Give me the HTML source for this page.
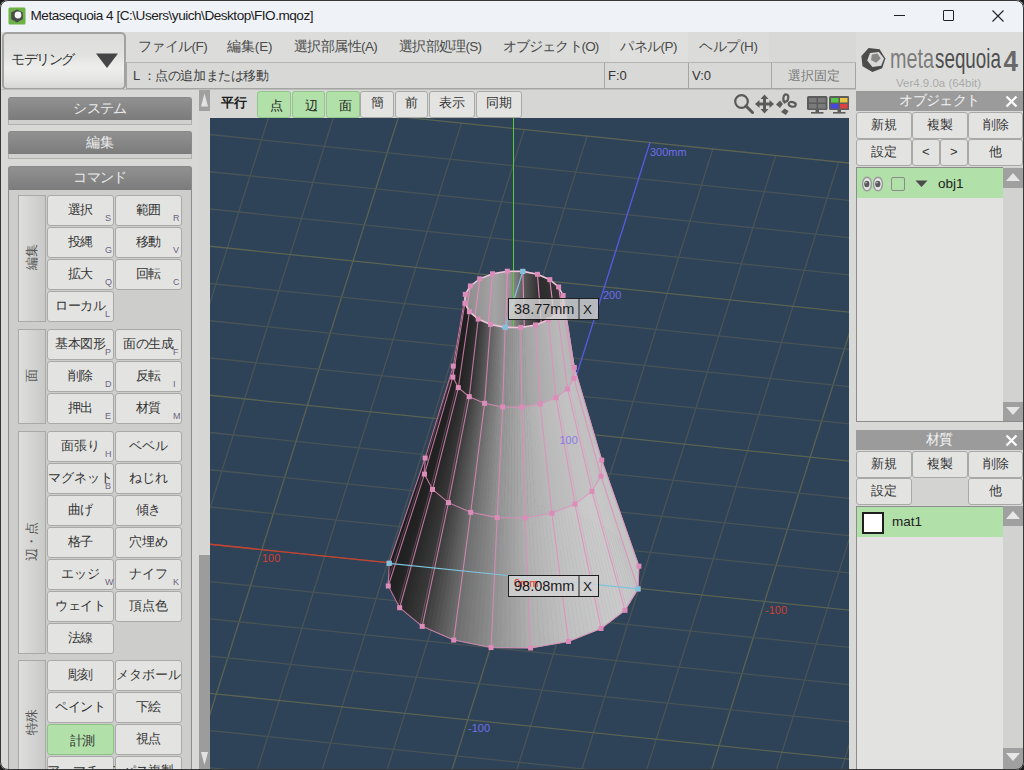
<!DOCTYPE html><html lang="ja"><head><meta charset="utf-8"><style>
*{box-sizing:border-box;margin:0;padding:0}
body{width:1024px;height:770px;overflow:hidden;background:#1e1e1e;font-family:"Liberation Sans",sans-serif;position:relative}
.a{position:absolute}
.t{position:absolute;white-space:nowrap;line-height:1}
.btn{position:absolute;background:#e3e4e2;border:1px solid #a9aaa8;border-radius:3px}
.hdr{position:absolute;background:linear-gradient(#8f8f8f,#7a7a7a);border-radius:3px 3px 0 0;color:#ececec;font-size:13px;text-align:center}
.sb{position:absolute;background:#9c9c9c}
</style></head><body>
<div class="a" id="win" style="left:0;top:0;width:1024px;height:770px;overflow:hidden;background:#d8d9d7">

<div class="a" style="left:0;top:0;width:1024px;height:32px;background:#eff3f8"></div>
<svg class="a" style="left:8px;top:7px" width="18" height="18" viewBox="0 0 18 18">
<rect x="0.5" y="0.5" width="17" height="17" rx="1.5" fill="#6cb245"/>
<polygon points="9,2.5 14.8,5.6 14.8,12.2 9,15.5 3.2,12.2 3.2,5.6" fill="#4a4a4a"/>
<circle cx="10" cy="8" r="3.4" fill="#f4f4f4"/>
</svg>
<div class="t" style="left:30.5px;top:9.2px;font-size:13.6px;letter-spacing:-0.5px;color:#1b1b1b">Metasequoia 4 [C:\Users\yuich\Desktop\FIO.mqoz]</div>
<div class="a" style="left:894px;top:15px;width:11px;height:1px;background:#222"></div>
<div class="a" style="left:943px;top:10px;width:11px;height:11px;border:1px solid #222;border-radius:1px"></div>
<svg class="a" style="left:992px;top:10px" width="12" height="12" viewBox="0 0 12 12"><path d="M0.5 0.5L11.5 11.5M11.5 0.5L0.5 11.5" stroke="#222" stroke-width="1.1"/></svg>
<div class="a" style="left:0;top:32px;width:1024px;height:58px;background:#dcdddb"></div>
<div class="a" style="left:2px;top:32px;width:124px;height:58px;border:2px solid #a2a3a1;border-radius:5px;background:linear-gradient(#dcdddb,#e2e3e1 40%,#eeefed 62%,#e4e5e3 85%,#d6d7d5)"></div>
<div class="t" style="left:11px;top:52px;font-size:14px;letter-spacing:-1.4px;color:#333">モデリング</div>
<svg class="a" style="left:95px;top:53px" width="24" height="16"><polygon points="1,0.5 23,0.5 12,15" fill="#454545"/></svg>
<div class="a" style="left:610px;top:32px;width:78px;height:30px;background:#dfe0de"></div>
<div class="a" style="left:688px;top:32px;width:81px;height:30px;background:#dbdcda"></div>
<div class="a" style="left:769px;top:32px;width:87px;height:30px;background:#d8d9d7"></div>
<div class="t" style="left:138px;top:40px;font-size:13.5px;letter-spacing:-0.6px;color:#4a4a4a">ファイル(F)</div>
<div class="t" style="left:227px;top:40px;font-size:13.5px;letter-spacing:-0.1px;color:#4a4a4a">編集(E)</div>
<div class="t" style="left:294px;top:40px;font-size:13.5px;letter-spacing:-0.6px;color:#4a4a4a">選択部属性(A)</div>
<div class="t" style="left:399px;top:40px;font-size:13.5px;letter-spacing:-0.7px;color:#4a4a4a">選択部処理(S)</div>
<div class="t" style="left:503px;top:40px;font-size:13.5px;letter-spacing:-0.9px;color:#4a4a4a">オブジェクト(O)</div>
<div class="t" style="left:620px;top:40px;font-size:13.5px;letter-spacing:-0.5px;color:#4a4a4a">パネル(P)</div>
<div class="t" style="left:699px;top:40px;font-size:13.5px;letter-spacing:-0.35px;color:#4a4a4a">ヘルプ(H)</div>
<div class="a" style="left:126px;top:62px;width:730px;height:2px;background:#b3b4b2"></div>
<div class="a" style="left:126px;top:63px;width:730px;height:27px;background:#d8d9d7;border-left:1px solid #a5a6a4;border-bottom:2px solid #a5a6a4"></div>
<div class="t" style="left:133px;top:69px;font-size:13px;letter-spacing:-0.4px;color:#3e3e3e">L ：点の追加または移動</div>
<div class="a" style="left:604px;top:63px;width:1px;height:27px;background:#a5a6a4"></div>
<div class="a" style="left:688px;top:63px;width:1px;height:27px;background:#a5a6a4"></div>
<div class="a" style="left:771px;top:63px;width:1px;height:27px;background:#a5a6a4"></div>
<div class="a" style="left:855px;top:63px;width:1px;height:27px;background:#a5a6a4"></div>
<div class="t" style="left:608px;top:69px;font-size:13px;color:#333">F:0</div>
<div class="t" style="left:692px;top:69px;font-size:13px;color:#333">V:0</div>
<div class="t" style="left:788px;top:69px;font-size:13px;color:#7a7a7a">選択固定</div>
<svg class="a" style="left:856px;top:40px" width="168" height="50" viewBox="856 40 168 50">
<polygon points="868.6,48.1 879.6,49.2 885.4,58.4 882.2,68.2 872.4,72.1 862.5,66.3 861.4,56" fill="#4c4c4c"/>
<polygon points="870,53 878.9,52 884,58.6 881.2,65.8 872.4,67 867.2,60.5" fill="#dadbd9"/>
<polygon points="871.9,54.4 877.5,53.4 880.8,58.4 876.1,62.8 871,60" fill="#888"/>
<text x="890" y="68.3" font-family="Liberation Sans, sans-serif" font-size="28" fill="#7c7c7c" textLength="44" lengthAdjust="spacingAndGlyphs">meta</text>
<text x="935" y="68.3" font-family="Liberation Sans, sans-serif" font-size="28" fill="#4e4e4e" textLength="66" lengthAdjust="spacingAndGlyphs">sequoia</text>
<text x="1003.5" y="70.8" font-family="Liberation Sans, sans-serif" font-size="29" font-weight="bold" fill="#686868" textLength="14.5" lengthAdjust="spacingAndGlyphs">4</text>
<text x="896" y="87" font-family="Liberation Sans, sans-serif" font-size="11" fill="#a9a9a9" textLength="85" lengthAdjust="spacingAndGlyphs">Ver4.9.0a (64bit)</text>
</svg>
<div class="a" style="left:0;top:90px;width:199px;height:680px;background:#d8d9d7"></div>
<div class="a" style="left:0;top:89px;width:856px;height:1px;background:#bdbebc"></div>
<div class="a" style="left:8px;top:97px;width:184px;height:23px;border-radius:3px 3px 0 0;background:linear-gradient(#919191,#7b7b7b);border:1px solid #8a8a8a;border-bottom:none"></div>
<div class="t" style="left:8px;top:102px;width:184px;text-align:center;font-size:13.5px;letter-spacing:-0.6px;color:#ebebeb">システム</div>
<div class="a" style="left:8px;top:120px;width:184px;height:5px;background:#d0d1cf;border:1px solid #b0b1af;border-top:none"></div>
<div class="a" style="left:8px;top:131px;width:184px;height:23px;border-radius:3px 3px 0 0;background:linear-gradient(#919191,#7b7b7b);border:1px solid #8a8a8a;border-bottom:none"></div>
<div class="t" style="left:8px;top:136px;width:184px;text-align:center;font-size:13.5px;letter-spacing:0;color:#ebebeb">編集</div>
<div class="a" style="left:8px;top:154px;width:184px;height:5px;background:#d0d1cf;border:1px solid #b0b1af;border-top:none"></div>
<div class="a" style="left:8px;top:166px;width:184px;height:24px;border-radius:3px 3px 0 0;background:linear-gradient(#919191,#7b7b7b);border:1px solid #8a8a8a;border-bottom:none"></div>
<div class="t" style="left:8px;top:170.5px;width:184px;text-align:center;font-size:13.5px;letter-spacing:-0.6px;color:#ebebeb">コマンド</div>
<div class="a" style="left:8px;top:190px;width:184px;height:580px;background:#cdcecc;border-left:1px solid #8c8c8c;border-right:1px solid #8c8c8c"></div>
<div class="a" style="left:18px;top:195px;width:28px;height:127px;background:linear-gradient(90deg,#dedfdd,#c9cac8);border:1px solid #a9aaa8"></div>
<div class="t" style="left:-8.5px;top:251.0px;width:80px;text-align:center;font-size:12.5px;color:#555;transform:rotate(-90deg)">編集</div>
<div class="btn" style="left:47px;top:195px;width:67px;height:31px;"></div>
<div class="t" style="left:47px;top:203.5px;width:67px;text-align:center;font-size:12.5px;letter-spacing:-0.1px;color:#333">選択</div>
<div class="t" style="left:105px;top:213.5px;font-size:9px;color:#6e6280">S</div>
<div class="btn" style="left:115px;top:195px;width:67px;height:31px;"></div>
<div class="t" style="left:115px;top:203.5px;width:67px;text-align:center;font-size:12.5px;letter-spacing:-0.1px;color:#333">範囲</div>
<div class="t" style="left:173px;top:213.5px;font-size:9px;color:#6e6280">R</div>
<div class="btn" style="left:47px;top:227px;width:67px;height:31px;"></div>
<div class="t" style="left:47px;top:235.5px;width:67px;text-align:center;font-size:12.5px;letter-spacing:-0.1px;color:#333">投縄</div>
<div class="t" style="left:105px;top:245.5px;font-size:9px;color:#6e6280">G</div>
<div class="btn" style="left:115px;top:227px;width:67px;height:31px;"></div>
<div class="t" style="left:115px;top:235.5px;width:67px;text-align:center;font-size:12.5px;letter-spacing:-0.1px;color:#333">移動</div>
<div class="t" style="left:173px;top:245.5px;font-size:9px;color:#6e6280">V</div>
<div class="btn" style="left:47px;top:259px;width:67px;height:31px;"></div>
<div class="t" style="left:47px;top:267.5px;width:67px;text-align:center;font-size:12.5px;letter-spacing:-0.1px;color:#333">拡大</div>
<div class="t" style="left:105px;top:277.5px;font-size:9px;color:#6e6280">Q</div>
<div class="btn" style="left:115px;top:259px;width:67px;height:31px;"></div>
<div class="t" style="left:115px;top:267.5px;width:67px;text-align:center;font-size:12.5px;letter-spacing:-0.1px;color:#333">回転</div>
<div class="t" style="left:173px;top:277.5px;font-size:9px;color:#6e6280">C</div>
<div class="btn" style="left:47px;top:291px;width:67px;height:31px;"></div>
<div class="t" style="left:47px;top:299.5px;width:67px;text-align:center;font-size:12.5px;letter-spacing:-0.1px;color:#333">ローカル</div>
<div class="t" style="left:105px;top:309.5px;font-size:9px;color:#6e6280">L</div>
<div class="a" style="left:18px;top:329px;width:28px;height:95px;background:linear-gradient(90deg,#dedfdd,#c9cac8);border:1px solid #a9aaa8"></div>
<div class="t" style="left:-8.5px;top:369.0px;width:80px;text-align:center;font-size:12.5px;color:#555;transform:rotate(-90deg)">面</div>
<div class="btn" style="left:47px;top:329px;width:67px;height:31px;"></div>
<div class="t" style="left:47px;top:337.5px;width:67px;text-align:center;font-size:12.5px;letter-spacing:-0.1px;color:#333">基本図形</div>
<div class="t" style="left:105px;top:347.5px;font-size:9px;color:#6e6280">P</div>
<div class="btn" style="left:115px;top:329px;width:67px;height:31px;"></div>
<div class="t" style="left:115px;top:337.5px;width:67px;text-align:center;font-size:12.5px;letter-spacing:-0.1px;color:#333">面の生成</div>
<div class="t" style="left:173px;top:347.5px;font-size:9px;color:#6e6280">F</div>
<div class="btn" style="left:47px;top:361px;width:67px;height:31px;"></div>
<div class="t" style="left:47px;top:369.5px;width:67px;text-align:center;font-size:12.5px;letter-spacing:-0.1px;color:#333">削除</div>
<div class="t" style="left:105px;top:379.5px;font-size:9px;color:#6e6280">D</div>
<div class="btn" style="left:115px;top:361px;width:67px;height:31px;"></div>
<div class="t" style="left:115px;top:369.5px;width:67px;text-align:center;font-size:12.5px;letter-spacing:-0.1px;color:#333">反転</div>
<div class="t" style="left:173px;top:379.5px;font-size:9px;color:#6e6280">I</div>
<div class="btn" style="left:47px;top:393px;width:67px;height:31px;"></div>
<div class="t" style="left:47px;top:401.5px;width:67px;text-align:center;font-size:12.5px;letter-spacing:-0.1px;color:#333">押出</div>
<div class="t" style="left:105px;top:411.5px;font-size:9px;color:#6e6280">E</div>
<div class="btn" style="left:115px;top:393px;width:67px;height:31px;"></div>
<div class="t" style="left:115px;top:401.5px;width:67px;text-align:center;font-size:12.5px;letter-spacing:-0.1px;color:#333">材質</div>
<div class="t" style="left:173px;top:411.5px;font-size:9px;color:#6e6280">M</div>
<div class="a" style="left:18px;top:431px;width:28px;height:223px;background:linear-gradient(90deg,#dedfdd,#c9cac8);border:1px solid #a9aaa8"></div>
<div class="t" style="left:-8.5px;top:535.0px;width:80px;text-align:center;font-size:12.5px;color:#555;transform:rotate(-90deg)">辺・点</div>
<div class="btn" style="left:47px;top:431px;width:67px;height:31px;"></div>
<div class="t" style="left:47px;top:439.5px;width:67px;text-align:center;font-size:12.5px;letter-spacing:-0.1px;color:#333">面張り</div>
<div class="t" style="left:105px;top:449.5px;font-size:9px;color:#6e6280">H</div>
<div class="btn" style="left:115px;top:431px;width:67px;height:31px;"></div>
<div class="t" style="left:115px;top:439.5px;width:67px;text-align:center;font-size:12.5px;letter-spacing:-0.1px;color:#333">ベベル</div>
<div class="btn" style="left:47px;top:463px;width:67px;height:31px;"></div>
<div class="t" style="left:47px;top:471.5px;width:67px;text-align:center;font-size:12.5px;letter-spacing:-0.1px;color:#333">マグネット</div>
<div class="t" style="left:105px;top:481.5px;font-size:9px;color:#6e6280">B</div>
<div class="btn" style="left:115px;top:463px;width:67px;height:31px;"></div>
<div class="t" style="left:115px;top:471.5px;width:67px;text-align:center;font-size:12.5px;letter-spacing:-0.1px;color:#333">ねじれ</div>
<div class="btn" style="left:47px;top:495px;width:67px;height:31px;"></div>
<div class="t" style="left:47px;top:503.5px;width:67px;text-align:center;font-size:12.5px;letter-spacing:-0.1px;color:#333">曲げ</div>
<div class="btn" style="left:115px;top:495px;width:67px;height:31px;"></div>
<div class="t" style="left:115px;top:503.5px;width:67px;text-align:center;font-size:12.5px;letter-spacing:-0.1px;color:#333">傾き</div>
<div class="btn" style="left:47px;top:527px;width:67px;height:31px;"></div>
<div class="t" style="left:47px;top:535.5px;width:67px;text-align:center;font-size:12.5px;letter-spacing:-0.1px;color:#333">格子</div>
<div class="btn" style="left:115px;top:527px;width:67px;height:31px;"></div>
<div class="t" style="left:115px;top:535.5px;width:67px;text-align:center;font-size:12.5px;letter-spacing:-0.1px;color:#333">穴埋め</div>
<div class="btn" style="left:47px;top:559px;width:67px;height:31px;"></div>
<div class="t" style="left:47px;top:567.5px;width:67px;text-align:center;font-size:12.5px;letter-spacing:-0.1px;color:#333">エッジ</div>
<div class="t" style="left:105px;top:577.5px;font-size:9px;color:#6e6280">W</div>
<div class="btn" style="left:115px;top:559px;width:67px;height:31px;"></div>
<div class="t" style="left:115px;top:567.5px;width:67px;text-align:center;font-size:12.5px;letter-spacing:-0.1px;color:#333">ナイフ</div>
<div class="t" style="left:173px;top:577.5px;font-size:9px;color:#6e6280">K</div>
<div class="btn" style="left:47px;top:591px;width:67px;height:31px;"></div>
<div class="t" style="left:47px;top:599.5px;width:67px;text-align:center;font-size:12.5px;letter-spacing:-0.1px;color:#333">ウェイト</div>
<div class="btn" style="left:115px;top:591px;width:67px;height:31px;"></div>
<div class="t" style="left:115px;top:599.5px;width:67px;text-align:center;font-size:12.5px;letter-spacing:-0.1px;color:#333">頂点色</div>
<div class="btn" style="left:47px;top:623px;width:67px;height:31px;"></div>
<div class="t" style="left:47px;top:631.5px;width:67px;text-align:center;font-size:12.5px;letter-spacing:-0.1px;color:#333">法線</div>
<div class="a" style="left:18px;top:660px;width:28px;height:127px;background:linear-gradient(90deg,#dedfdd,#c9cac8);border:1px solid #a9aaa8"></div>
<div class="t" style="left:-8.5px;top:716.0px;width:80px;text-align:center;font-size:12.5px;color:#555;transform:rotate(-90deg)">特殊</div>
<div class="btn" style="left:47px;top:660px;width:67px;height:31px;"></div>
<div class="t" style="left:47px;top:668.5px;width:67px;text-align:center;font-size:12.5px;letter-spacing:-0.1px;color:#333">彫刻</div>
<div class="btn" style="left:115px;top:660px;width:67px;height:31px;"></div>
<div class="t" style="left:115px;top:668.5px;width:67px;text-align:center;font-size:12.5px;letter-spacing:-0.1px;color:#333">メタボール</div>
<div class="btn" style="left:47px;top:692px;width:67px;height:31px;"></div>
<div class="t" style="left:47px;top:700.5px;width:67px;text-align:center;font-size:12.5px;letter-spacing:-0.1px;color:#333">ペイント</div>
<div class="btn" style="left:115px;top:692px;width:67px;height:31px;"></div>
<div class="t" style="left:115px;top:700.5px;width:67px;text-align:center;font-size:12.5px;letter-spacing:-0.1px;color:#333">下絵</div>
<div class="btn" style="left:47px;top:724px;width:67px;height:31px;background:#b1e0a9;border-color:#8fbf88;"></div>
<div class="t" style="left:49px;top:734.5px;width:67px;text-align:center;font-size:12.5px;letter-spacing:-0.1px;color:#333">計測</div>
<div class="btn" style="left:115px;top:724px;width:67px;height:31px;"></div>
<div class="t" style="left:115px;top:732.5px;width:67px;text-align:center;font-size:12.5px;letter-spacing:-0.1px;color:#333">視点</div>
<div class="btn" style="left:47px;top:756px;width:67px;height:31px;"></div>
<div class="t" style="left:47px;top:764.5px;width:67px;text-align:center;font-size:12.5px;letter-spacing:-0.1px;color:#333">アーマチュア</div>
<div class="btn" style="left:115px;top:756px;width:67px;height:31px;"></div>
<div class="t" style="left:115px;top:764.5px;width:67px;text-align:center;font-size:12.5px;letter-spacing:-0.1px;color:#333">パス複製</div>
<div class="a" style="left:199px;top:90px;width:11px;height:680px;background:#d6d7d5"></div>
<div class="a" style="left:199px;top:90px;width:11px;height:21px;background:#a0a0a0"></div>
<svg class="a" style="left:199px;top:90px" width="11" height="21"><polygon points="5.5,3.5 9,16.5 2,16.5" fill="#e2e2e2"/></svg>
<div class="a" style="left:199px;top:555px;width:11px;height:215px;background:#9c9c9c"></div>
<svg class="a" style="left:199px;top:748px" width="11" height="21"><polygon points="2,4 9,4 5.5,17" fill="#e2e2e2"/></svg>
<div class="a" style="left:192px;top:190px;width:7px;height:580px;background:#d8d9d7"></div>
<div class="a" style="left:210px;top:90px;width:639px;height:28px;background:#d6d7d5"></div>
<div class="t" style="left:221px;top:96px;font-size:13px;font-weight:bold;color:#1a1a1a">平行</div>
<div class="btn" style="left:257px;top:91px;width:34px;height:27px;background:#b1e0a9;border-color:#93c58c;"></div>
<div class="t" style="left:270px;top:98.5px;font-size:13px;color:#222">点</div>
<div class="btn" style="left:292px;top:91px;width:33px;height:27px;background:#b1e0a9;border-color:#93c58c;"></div>
<div class="t" style="left:305px;top:98.5px;font-size:13px;color:#222">辺</div>
<div class="btn" style="left:326px;top:91px;width:34px;height:27px;background:#b1e0a9;border-color:#93c58c;"></div>
<div class="t" style="left:339px;top:98.5px;font-size:13px;color:#222">面</div>
<div class="btn" style="left:360px;top:91px;width:34px;height:27px;"></div>
<div class="t" style="left:370.5px;top:96px;font-size:13px;color:#333">簡</div>
<div class="btn" style="left:395px;top:91px;width:33px;height:27px;"></div>
<div class="t" style="left:405.0px;top:96px;font-size:13px;color:#333">前</div>
<div class="btn" style="left:429px;top:91px;width:46px;height:27px;"></div>
<div class="t" style="left:439.0px;top:96px;font-size:13px;color:#333">表示</div>
<div class="btn" style="left:476px;top:91px;width:46px;height:27px;"></div>
<div class="t" style="left:486.0px;top:96px;font-size:13px;color:#333">同期</div>
<svg class="a" style="left:730px;top:92px" width="120" height="24" viewBox="730 92 120 24">
<circle cx="741.5" cy="101.5" r="6.3" fill="none" stroke="#5a5a5a" stroke-width="2.2"/>
<line x1="746" y1="106" x2="752.5" y2="112.5" stroke="#5a5a5a" stroke-width="3" stroke-linecap="round"/>
<path d="M764.5 94.5 L768.5 99 L766 99 L766 102.5 L769.5 102.5 L769.5 100 L774 104 L769.5 108 L769.5 105.5 L766 105.5 L766 109 L768.5 109 L764.5 113.5 L760.5 109 L763 109 L763 105.5 L759.5 105.5 L759.5 108 L755 104 L759.5 100 L759.5 102.5 L763 102.5 L763 99 L760.5 99 Z" fill="#5a5a5a"/>
<g fill="none" stroke="#5c5c5c" stroke-width="2.2">
<ellipse cx="785.8" cy="98" rx="2.4" ry="3.6" transform="rotate(12 785.8 98)"/>
<ellipse cx="792.2" cy="104.3" rx="3.6" ry="2.3" transform="rotate(12 792.2 104.3)"/>
</g>
<g fill="#5c5c5c">
<path d="M776 104.5 L780 100.5 L783 104 L780 108 Z"/>
<path d="M781 112 L784.5 108.5 L788.5 111 L786 115 Z"/>
<path d="M782 101 L786 102.5 L784.5 104 Z"/>
</g>
<rect x="807" y="96" width="20.5" height="14" rx="1.5" fill="#5c5c5c"/>
<rect x="809" y="98" width="7.5" height="4.5" fill="#7a7a7a"/><rect x="818" y="98" width="7.5" height="4.5" fill="#7a7a7a"/>
<rect x="809" y="104" width="7.5" height="4.5" fill="#7a7a7a"/><rect x="818" y="104" width="7.5" height="4.5" fill="#7a7a7a"/>
<rect x="815.5" y="110" width="3.5" height="2" fill="#5c5c5c"/><rect x="811" y="112" width="12.5" height="1.6" fill="#5c5c5c"/>
<rect x="829" y="96" width="20.5" height="14" rx="1.5" fill="#5c5c5c"/>
<rect x="831" y="98" width="7.5" height="4.5" fill="#55c548"/><rect x="840" y="98" width="7.5" height="4.5" fill="#e8c640"/>
<rect x="831" y="104" width="7.5" height="4.5" fill="#4848e0"/><rect x="840" y="104" width="7.5" height="4.5" fill="#e04040"/>
<rect x="837.5" y="110" width="3.5" height="2" fill="#5c5c5c"/><rect x="833" y="112" width="12.5" height="1.6" fill="#5c5c5c"/>
</svg>
<svg class="a" style="left:210px;top:118px" width="639" height="651" viewBox="210 118 639 651">
<rect x="210" y="118" width="639" height="651" fill="#2e4258"/>
<g stroke-width="1.3" fill="none">
<line x1="-229.92" y1="51.96" x2="-526.06" y2="990.04" stroke="#485456"/>
<line x1="-167.07" y1="58.43" x2="-463.21" y2="996.51" stroke="#485456"/>
<line x1="-104.22" y1="64.90" x2="-400.36" y2="1002.98" stroke="#5a6352"/>
<line x1="-41.37" y1="71.37" x2="-337.51" y2="1009.45" stroke="#485456"/>
<line x1="21.48" y1="77.84" x2="-274.66" y2="1015.92" stroke="#485456"/>
<line x1="84.33" y1="84.31" x2="-211.81" y2="1022.39" stroke="#485456"/>
<line x1="147.18" y1="90.78" x2="-148.96" y2="1028.86" stroke="#5a6352"/>
<line x1="210.03" y1="97.25" x2="-86.11" y2="1035.33" stroke="#485456"/>
<line x1="272.88" y1="103.72" x2="-23.26" y2="1041.80" stroke="#485456"/>
<line x1="335.73" y1="110.19" x2="39.59" y2="1048.27" stroke="#485456"/>
<line x1="398.58" y1="116.66" x2="102.44" y2="1054.74" stroke="#5a6352"/>
<line x1="461.43" y1="123.13" x2="165.29" y2="1061.21" stroke="#485456"/>
<line x1="524.28" y1="129.60" x2="228.14" y2="1067.68" stroke="#485456"/>
<line x1="587.13" y1="136.07" x2="290.99" y2="1074.15" stroke="#485456"/>
<line x1="513.30" y1="575.50" x2="353.84" y2="1080.62" stroke="#5a6352"/>
<line x1="712.83" y1="149.01" x2="416.69" y2="1087.09" stroke="#485456"/>
<line x1="775.68" y1="155.48" x2="479.54" y2="1093.56" stroke="#485456"/>
<line x1="838.53" y1="161.95" x2="542.39" y2="1100.03" stroke="#485456"/>
<line x1="901.38" y1="168.42" x2="605.24" y2="1106.50" stroke="#5a6352"/>
<line x1="964.23" y1="174.89" x2="668.09" y2="1112.97" stroke="#485456"/>
<line x1="1027.08" y1="181.36" x2="730.94" y2="1119.44" stroke="#485456"/>
<line x1="1089.93" y1="187.83" x2="793.79" y2="1125.91" stroke="#485456"/>
<line x1="1152.78" y1="194.30" x2="856.64" y2="1132.38" stroke="#5a6352"/>
<line x1="1215.63" y1="200.77" x2="919.49" y2="1138.85" stroke="#485456"/>
<line x1="1278.48" y1="207.24" x2="982.34" y2="1145.32" stroke="#485456"/>
<line x1="1341.33" y1="213.71" x2="1045.19" y2="1151.79" stroke="#485456"/>
<line x1="1404.18" y1="220.18" x2="1108.04" y2="1158.26" stroke="#5a6352"/>
<line x1="1467.03" y1="226.65" x2="1170.89" y2="1164.73" stroke="#485456"/>
<line x1="1529.88" y1="233.12" x2="1233.74" y2="1171.20" stroke="#485456"/>
<line x1="-229.92" y1="51.96" x2="1529.88" y2="233.12" stroke="#5a6352"/>
<line x1="-241.31" y1="88.04" x2="1518.49" y2="269.20" stroke="#485456"/>
<line x1="-252.70" y1="124.12" x2="1507.10" y2="305.28" stroke="#485456"/>
<line x1="-264.09" y1="160.20" x2="1495.71" y2="341.36" stroke="#485456"/>
<line x1="-275.48" y1="196.28" x2="1484.32" y2="377.44" stroke="#5a6352"/>
<line x1="-286.87" y1="232.36" x2="1472.93" y2="413.52" stroke="#485456"/>
<line x1="-298.26" y1="268.44" x2="1461.54" y2="449.60" stroke="#485456"/>
<line x1="-309.65" y1="304.52" x2="1450.15" y2="485.68" stroke="#485456"/>
<line x1="-321.04" y1="340.60" x2="1438.76" y2="521.76" stroke="#5a6352"/>
<line x1="-332.43" y1="376.68" x2="1427.37" y2="557.84" stroke="#485456"/>
<line x1="-343.82" y1="412.76" x2="1415.98" y2="593.92" stroke="#485456"/>
<line x1="-355.21" y1="448.84" x2="1404.59" y2="630.00" stroke="#485456"/>
<line x1="-366.60" y1="484.92" x2="1393.20" y2="666.08" stroke="#5a6352"/>
<line x1="-377.99" y1="521.00" x2="1381.81" y2="702.16" stroke="#485456"/>
<line x1="-389.38" y1="557.08" x2="1370.42" y2="738.24" stroke="#485456"/>
<line x1="-400.77" y1="593.16" x2="1359.03" y2="774.32" stroke="#485456"/>
<line x1="-412.16" y1="629.24" x2="1347.64" y2="810.40" stroke="#5a6352"/>
<line x1="-423.55" y1="665.32" x2="1336.25" y2="846.48" stroke="#485456"/>
<line x1="-434.94" y1="701.40" x2="1324.86" y2="882.56" stroke="#485456"/>
<line x1="-446.33" y1="737.48" x2="1313.47" y2="918.64" stroke="#485456"/>
<line x1="-457.72" y1="773.56" x2="1302.08" y2="954.72" stroke="#5a6352"/>
<line x1="-469.11" y1="809.64" x2="1290.69" y2="990.80" stroke="#485456"/>
<line x1="-480.50" y1="845.72" x2="1279.30" y2="1026.88" stroke="#485456"/>
<line x1="-491.89" y1="881.80" x2="1267.91" y2="1062.96" stroke="#485456"/>
<line x1="-503.28" y1="917.88" x2="1256.52" y2="1099.04" stroke="#5a6352"/>
<line x1="-514.67" y1="953.96" x2="1245.13" y2="1135.12" stroke="#485456"/>
<line x1="-526.06" y1="990.04" x2="1233.74" y2="1171.20" stroke="#485456"/>
</g>
<g stroke-width="1.3">
<line x1="513.30" y1="575.50" x2="-366.60" y2="484.92" stroke="#c8402e"/>
<line x1="513.30" y1="575.50" x2="649.98" y2="142.54" stroke="#5a5ae0"/>
</g>
<defs><linearGradient id="inner" x1="465" y1="0" x2="565" y2="0" gradientUnits="userSpaceOnUse"><stop offset="0" stop-color="#8c8c8c"/><stop offset="0.3" stop-color="#a4a4a4"/><stop offset="0.45" stop-color="#949494"/><stop offset="0.6" stop-color="#555555"/><stop offset="0.75" stop-color="#2c2c2c"/><stop offset="1" stop-color="#383838"/></linearGradient><clipPath id="topclip"><polygon points="465.27,294.33 464.92,303.22 469.38,311.74 478.21,319.03 490.54,324.41 505.17,327.33 520.66,327.51 535.50,324.93 548.24,319.85 557.62,312.77 562.73,304.37 563.08,295.48 558.62,286.96 549.79,279.67 537.46,274.29 522.83,271.37 507.34,271.19 492.50,273.77 479.76,278.85 470.38,285.93"/></clipPath></defs>
<polygon points="562.73,304.37 563.08,295.48 574.36,367.50 573.94,378.51" fill="#b8b8b8" stroke="#b8b8b8" stroke-width="0.6"/>
<polygon points="563.08,295.48 558.62,286.96 568.84,356.97 574.36,367.50" fill="#b8b8b8" stroke="#b8b8b8" stroke-width="0.6"/>
<polygon points="558.62,286.96 549.79,279.67 557.91,347.93 568.84,356.97" fill="#b8b8b8" stroke="#b8b8b8" stroke-width="0.6"/>
<polygon points="549.79,279.67 537.46,274.29 542.64,341.28 557.91,347.93" fill="#b8b8b8" stroke="#b8b8b8" stroke-width="0.6"/>
<polygon points="537.46,274.29 522.83,271.37 524.53,337.66 542.64,341.28" fill="#b8b8b8" stroke="#b8b8b8" stroke-width="0.6"/>
<polygon points="522.83,271.37 507.34,271.19 505.35,337.44 524.53,337.66" fill="#1e1e1e" stroke="#1e1e1e" stroke-width="0.6"/>
<polygon points="507.34,271.19 492.50,273.77 486.98,340.63 505.35,337.44" fill="#1e1e1e" stroke="#1e1e1e" stroke-width="0.6"/>
<polygon points="492.50,273.77 479.76,278.85 471.21,346.92 486.98,340.63" fill="#1e1e1e" stroke="#1e1e1e" stroke-width="0.6"/>
<polygon points="479.76,278.85 470.38,285.93 459.60,355.69 471.21,346.92" fill="#1e1e1e" stroke="#1e1e1e" stroke-width="0.6"/>
<polygon points="470.38,285.93 465.27,294.33 453.26,366.09 459.60,355.69" fill="#1e1e1e" stroke="#1e1e1e" stroke-width="0.6"/>
<polygon points="573.94,378.51 574.36,367.50 601.71,460.11 601.09,476.16" fill="#c0c0c0" stroke="#c0c0c0" stroke-width="0.6"/>
<polygon points="574.36,367.50 568.84,356.97 593.66,444.74 601.71,460.11" fill="#c0c0c0" stroke="#c0c0c0" stroke-width="0.6"/>
<polygon points="568.84,356.97 557.91,347.93 577.72,431.56 593.66,444.74" fill="#c0c0c0" stroke="#c0c0c0" stroke-width="0.6"/>
<polygon points="557.91,347.93 542.64,341.28 555.46,421.86 577.72,431.56" fill="#c0c0c0" stroke="#c0c0c0" stroke-width="0.6"/>
<polygon points="542.64,341.28 524.53,337.66 529.05,416.59 555.46,421.86" fill="#c0c0c0" stroke="#c0c0c0" stroke-width="0.6"/>
<polygon points="524.53,337.66 505.35,337.44 501.08,416.26 529.05,416.59" fill="#1e1e1e" stroke="#1e1e1e" stroke-width="0.6"/>
<polygon points="505.35,337.44 486.98,340.63 474.28,420.91 501.08,416.26" fill="#1e1e1e" stroke="#1e1e1e" stroke-width="0.6"/>
<polygon points="486.98,340.63 471.21,346.92 451.29,430.08 474.28,420.91" fill="#1e1e1e" stroke="#1e1e1e" stroke-width="0.6"/>
<polygon points="471.21,346.92 459.60,355.69 434.34,442.88 451.29,430.08" fill="#1e1e1e" stroke="#1e1e1e" stroke-width="0.6"/>
<polygon points="459.60,355.69 453.26,366.09 425.11,458.04 434.34,442.88" fill="#1e1e1e" stroke="#1e1e1e" stroke-width="0.6"/>
<polygon points="601.09,476.16 601.71,460.11 638.92,566.21 638.04,588.91" fill="#c4c4c4" stroke="#c4c4c4" stroke-width="0.6"/>
<polygon points="601.71,460.11 593.66,444.74 627.53,544.47 638.92,566.21" fill="#c4c4c4" stroke="#c4c4c4" stroke-width="0.6"/>
<polygon points="593.66,444.74 577.72,431.56 604.99,525.84 627.53,544.47" fill="#c4c4c4" stroke="#c4c4c4" stroke-width="0.6"/>
<polygon points="577.72,431.56 555.46,421.86 573.50,512.12 604.99,525.84" fill="#c4c4c4" stroke="#c4c4c4" stroke-width="0.6"/>
<polygon points="555.46,421.86 529.05,416.59 536.15,504.66 573.50,512.12" fill="#c4c4c4" stroke="#c4c4c4" stroke-width="0.6"/>
<polygon points="529.05,416.59 501.08,416.26 496.59,504.20 536.15,504.66" fill="#1e1e1e" stroke="#1e1e1e" stroke-width="0.6"/>
<polygon points="501.08,416.26 474.28,420.91 458.70,510.78 496.59,504.20" fill="#1e1e1e" stroke="#1e1e1e" stroke-width="0.6"/>
<polygon points="474.28,420.91 451.29,430.08 426.18,523.75 458.70,510.78" fill="#1e1e1e" stroke="#1e1e1e" stroke-width="0.6"/>
<polygon points="451.29,430.08 434.34,442.88 402.22,541.84 426.18,523.75" fill="#1e1e1e" stroke="#1e1e1e" stroke-width="0.6"/>
<polygon points="434.34,442.88 425.11,458.04 389.16,563.29 402.22,541.84" fill="#1e1e1e" stroke="#1e1e1e" stroke-width="0.6"/>
<polygon points="465.3,294.3 465.2,295.4 453.2,367.5 453.3,366.1" fill="#1c1c1c" stroke="#1c1c1c" stroke-width="0.7"/>
<polygon points="465.2,295.4 465.2,296.6 453.2,368.8 453.2,367.5" fill="#1c1c1c" stroke="#1c1c1c" stroke-width="0.7"/>
<polygon points="465.2,296.6 465.1,297.7 453.1,370.2 453.2,368.8" fill="#1c1c1c" stroke="#1c1c1c" stroke-width="0.7"/>
<polygon points="465.1,297.7 465.1,298.8 453.1,371.6 453.1,370.2" fill="#1c1c1c" stroke="#1c1c1c" stroke-width="0.7"/>
<polygon points="465.1,298.8 465.1,299.9 453.0,373.0 453.1,371.6" fill="#1d1d1d" stroke="#1d1d1d" stroke-width="0.7"/>
<polygon points="465.1,299.9 465.0,301.0 452.9,374.3 453.0,373.0" fill="#1d1d1d" stroke="#1d1d1d" stroke-width="0.7"/>
<polygon points="465.0,301.0 465.0,302.1 452.9,375.7 452.9,374.3" fill="#1d1d1d" stroke="#1d1d1d" stroke-width="0.7"/>
<polygon points="465.0,302.1 464.9,303.2 452.8,377.1 452.9,375.7" fill="#1d1d1d" stroke="#1d1d1d" stroke-width="0.7"/>
<polygon points="464.9,303.2 465.5,304.3 453.5,378.4 452.8,377.1" fill="#1e1e1e" stroke="#1e1e1e" stroke-width="0.7"/>
<polygon points="465.5,304.3 466.0,305.4 454.2,379.7 453.5,378.4" fill="#1e1e1e" stroke="#1e1e1e" stroke-width="0.7"/>
<polygon points="466.0,305.4 466.6,306.4 454.9,381.0 454.2,379.7" fill="#1f1f1f" stroke="#1f1f1f" stroke-width="0.7"/>
<polygon points="466.6,306.4 467.2,307.5 455.6,382.4 454.9,381.0" fill="#1f1f1f" stroke="#1f1f1f" stroke-width="0.7"/>
<polygon points="467.2,307.5 467.7,308.5 456.3,383.7 455.6,382.4" fill="#202020" stroke="#202020" stroke-width="0.7"/>
<polygon points="467.7,308.5 468.3,309.6 457.0,385.0 456.3,383.7" fill="#202020" stroke="#202020" stroke-width="0.7"/>
<polygon points="468.3,309.6 468.8,310.7 457.7,386.3 457.0,385.0" fill="#212121" stroke="#212121" stroke-width="0.7"/>
<polygon points="468.8,310.7 469.4,311.7 458.4,387.6 457.7,386.3" fill="#212121" stroke="#212121" stroke-width="0.7"/>
<polygon points="469.4,311.7 470.5,312.6 459.7,388.8 458.4,387.6" fill="#232323" stroke="#232323" stroke-width="0.7"/>
<polygon points="470.5,312.6 471.6,313.6 461.1,389.9 459.7,388.8" fill="#252525" stroke="#252525" stroke-width="0.7"/>
<polygon points="471.6,313.6 472.7,314.5 462.5,391.0 461.1,389.9" fill="#272727" stroke="#272727" stroke-width="0.7"/>
<polygon points="472.7,314.5 473.8,315.4 463.8,392.2 462.5,391.0" fill="#292929" stroke="#292929" stroke-width="0.7"/>
<polygon points="473.8,315.4 474.9,316.3 465.2,393.3 463.8,392.2" fill="#2b2b2b" stroke="#2b2b2b" stroke-width="0.7"/>
<polygon points="474.9,316.3 476.0,317.2 466.6,394.4 465.2,393.3" fill="#2d2d2d" stroke="#2d2d2d" stroke-width="0.7"/>
<polygon points="476.0,317.2 477.1,318.1 467.9,395.5 466.6,394.4" fill="#2f2f2f" stroke="#2f2f2f" stroke-width="0.7"/>
<polygon points="477.1,318.1 478.2,319.0 469.3,396.7 467.9,395.5" fill="#313131" stroke="#313131" stroke-width="0.7"/>
<polygon points="478.2,319.0 479.8,319.7 471.2,397.5 469.3,396.7" fill="#343434" stroke="#343434" stroke-width="0.7"/>
<polygon points="479.8,319.7 481.3,320.4 473.1,398.3 471.2,397.5" fill="#3a3a3a" stroke="#3a3a3a" stroke-width="0.7"/>
<polygon points="481.3,320.4 482.8,321.0 475.0,399.2 473.1,398.3" fill="#404040" stroke="#404040" stroke-width="0.7"/>
<polygon points="482.8,321.0 484.4,321.7 476.9,400.0 475.0,399.2" fill="#454545" stroke="#454545" stroke-width="0.7"/>
<polygon points="484.4,321.7 485.9,322.4 478.8,400.8 476.9,400.0" fill="#4b4b4b" stroke="#4b4b4b" stroke-width="0.7"/>
<polygon points="485.9,322.4 487.5,323.1 480.7,401.7 478.8,400.8" fill="#505050" stroke="#505050" stroke-width="0.7"/>
<polygon points="487.5,323.1 489.0,323.7 482.6,402.5 480.7,401.7" fill="#565656" stroke="#565656" stroke-width="0.7"/>
<polygon points="489.0,323.7 490.5,324.4 484.6,403.3 482.6,402.5" fill="#5c5c5c" stroke="#5c5c5c" stroke-width="0.7"/>
<polygon points="490.5,324.4 492.4,324.8 486.8,403.8 484.6,403.3" fill="#616161" stroke="#616161" stroke-width="0.7"/>
<polygon points="492.4,324.8 494.2,325.1 489.1,404.2 486.8,403.8" fill="#676767" stroke="#676767" stroke-width="0.7"/>
<polygon points="494.2,325.1 496.0,325.5 491.3,404.7 489.1,404.2" fill="#6d6d6d" stroke="#6d6d6d" stroke-width="0.7"/>
<polygon points="496.0,325.5 497.9,325.9 493.6,405.1 491.3,404.7" fill="#727272" stroke="#727272" stroke-width="0.7"/>
<polygon points="497.9,325.9 499.7,326.2 495.9,405.6 493.6,405.1" fill="#787878" stroke="#787878" stroke-width="0.7"/>
<polygon points="499.7,326.2 501.5,326.6 498.1,406.0 495.9,405.6" fill="#7d7d7d" stroke="#7d7d7d" stroke-width="0.7"/>
<polygon points="501.5,326.6 503.3,327.0 500.4,406.5 498.1,406.0" fill="#838383" stroke="#838383" stroke-width="0.7"/>
<polygon points="503.3,327.0 505.2,327.3 502.7,406.9 500.4,406.5" fill="#898989" stroke="#898989" stroke-width="0.7"/>
<polygon points="505.2,327.3 507.1,327.3 505.1,407.0 502.7,406.9" fill="#8d8d8d" stroke="#8d8d8d" stroke-width="0.7"/>
<polygon points="507.1,327.3 509.0,327.4 507.5,407.0 505.1,407.0" fill="#8f8f8f" stroke="#8f8f8f" stroke-width="0.7"/>
<polygon points="509.0,327.4 511.0,327.4 509.9,407.0 507.5,407.0" fill="#929292" stroke="#929292" stroke-width="0.7"/>
<polygon points="511.0,327.4 512.9,327.4 512.3,407.0 509.9,407.0" fill="#949494" stroke="#949494" stroke-width="0.7"/>
<polygon points="512.9,327.4 514.9,327.4 514.7,407.1 512.3,407.0" fill="#979797" stroke="#979797" stroke-width="0.7"/>
<polygon points="514.9,327.4 516.8,327.5 517.1,407.1 514.7,407.1" fill="#999999" stroke="#999999" stroke-width="0.7"/>
<polygon points="516.8,327.5 518.7,327.5 519.4,407.1 517.1,407.1" fill="#9c9c9c" stroke="#9c9c9c" stroke-width="0.7"/>
<polygon points="518.7,327.5 520.7,327.5 521.8,407.2 519.4,407.1" fill="#9e9e9e" stroke="#9e9e9e" stroke-width="0.7"/>
<polygon points="520.7,327.5 522.5,327.2 524.1,406.8 521.8,407.2" fill="#a0a0a0" stroke="#a0a0a0" stroke-width="0.7"/>
<polygon points="522.5,327.2 524.4,326.9 526.4,406.4 524.1,406.8" fill="#a2a2a2" stroke="#a2a2a2" stroke-width="0.7"/>
<polygon points="524.4,326.9 526.2,326.5 528.7,406.0 526.4,406.4" fill="#a3a3a3" stroke="#a3a3a3" stroke-width="0.7"/>
<polygon points="526.2,326.5 528.1,326.2 531.0,405.6 528.7,406.0" fill="#a5a5a5" stroke="#a5a5a5" stroke-width="0.7"/>
<polygon points="528.1,326.2 529.9,325.9 533.3,405.2 531.0,405.6" fill="#a6a6a6" stroke="#a6a6a6" stroke-width="0.7"/>
<polygon points="529.9,325.9 531.8,325.6 535.6,404.8 533.3,405.2" fill="#a8a8a8" stroke="#a8a8a8" stroke-width="0.7"/>
<polygon points="531.8,325.6 533.6,325.3 537.9,404.4 535.6,404.8" fill="#a9a9a9" stroke="#a9a9a9" stroke-width="0.7"/>
<polygon points="533.6,325.3 535.5,324.9 540.2,404.0 537.9,404.4" fill="#ababab" stroke="#ababab" stroke-width="0.7"/>
<polygon points="535.5,324.9 537.1,324.3 542.2,403.2 540.2,404.0" fill="#acacac" stroke="#acacac" stroke-width="0.7"/>
<polygon points="537.1,324.3 538.7,323.7 544.2,402.4 542.2,403.2" fill="#adadad" stroke="#adadad" stroke-width="0.7"/>
<polygon points="538.7,323.7 540.3,323.0 546.1,401.6 544.2,402.4" fill="#aeaeae" stroke="#aeaeae" stroke-width="0.7"/>
<polygon points="540.3,323.0 541.9,322.4 548.1,400.8 546.1,401.6" fill="#afafaf" stroke="#afafaf" stroke-width="0.7"/>
<polygon points="541.9,322.4 543.5,321.8 550.1,400.0 548.1,400.8" fill="#b0b0b0" stroke="#b0b0b0" stroke-width="0.7"/>
<polygon points="543.5,321.8 545.1,321.1 552.0,399.3 550.1,400.0" fill="#b1b1b1" stroke="#b1b1b1" stroke-width="0.7"/>
<polygon points="545.1,321.1 546.6,320.5 554.0,398.5 552.0,399.3" fill="#b2b2b2" stroke="#b2b2b2" stroke-width="0.7"/>
<polygon points="546.6,320.5 548.2,319.9 556.0,397.7 554.0,398.5" fill="#b3b3b3" stroke="#b3b3b3" stroke-width="0.7"/>
<polygon points="548.2,319.9 549.4,319.0 557.4,396.6 556.0,397.7" fill="#b4b4b4" stroke="#b4b4b4" stroke-width="0.7"/>
<polygon points="549.4,319.0 550.6,318.1 558.9,395.5 557.4,396.6" fill="#b5b5b5" stroke="#b5b5b5" stroke-width="0.7"/>
<polygon points="550.6,318.1 551.8,317.2 560.3,394.4 558.9,395.5" fill="#b5b5b5" stroke="#b5b5b5" stroke-width="0.7"/>
<polygon points="551.8,317.2 552.9,316.3 561.8,393.3 560.3,394.4" fill="#b6b6b6" stroke="#b6b6b6" stroke-width="0.7"/>
<polygon points="552.9,316.3 554.1,315.4 563.2,392.2 561.8,393.3" fill="#b7b7b7" stroke="#b7b7b7" stroke-width="0.7"/>
<polygon points="554.1,315.4 555.3,314.5 564.7,391.1 563.2,392.2" fill="#b8b8b8" stroke="#b8b8b8" stroke-width="0.7"/>
<polygon points="555.3,314.5 556.4,313.7 566.2,390.0 564.7,391.1" fill="#b8b8b8" stroke="#b8b8b8" stroke-width="0.7"/>
<polygon points="556.4,313.7 557.6,312.8 567.6,388.9 566.2,390.0" fill="#b9b9b9" stroke="#b9b9b9" stroke-width="0.7"/>
<polygon points="557.6,312.8 558.3,311.7 568.4,387.6 567.6,388.9" fill="#b9b9b9" stroke="#b9b9b9" stroke-width="0.7"/>
<polygon points="558.3,311.7 558.9,310.7 569.2,386.3 568.4,387.6" fill="#b9b9b9" stroke="#b9b9b9" stroke-width="0.7"/>
<polygon points="558.9,310.7 559.5,309.6 570.0,385.0 569.2,386.3" fill="#b9b9b9" stroke="#b9b9b9" stroke-width="0.7"/>
<polygon points="559.5,309.6 560.2,308.6 570.8,383.7 570.0,385.0" fill="#b9b9b9" stroke="#b9b9b9" stroke-width="0.7"/>
<polygon points="560.2,308.6 560.8,307.5 571.6,382.4 570.8,383.7" fill="#b8b8b8" stroke="#b8b8b8" stroke-width="0.7"/>
<polygon points="560.8,307.5 561.5,306.5 572.4,381.1 571.6,382.4" fill="#b8b8b8" stroke="#b8b8b8" stroke-width="0.7"/>
<polygon points="561.5,306.5 562.1,305.4 573.1,379.8 572.4,381.1" fill="#b8b8b8" stroke="#b8b8b8" stroke-width="0.7"/>
<polygon points="562.1,305.4 562.7,304.4 573.9,378.5 573.1,379.8" fill="#b8b8b8" stroke="#b8b8b8" stroke-width="0.7"/>
<polygon points="453.3,366.1 453.2,367.5 425.0,460.0 425.1,458.0" fill="#1e1e1e" stroke="#1e1e1e" stroke-width="0.7"/>
<polygon points="453.2,367.5 453.2,368.8 425.0,462.1 425.0,460.0" fill="#1e1e1e" stroke="#1e1e1e" stroke-width="0.7"/>
<polygon points="453.2,368.8 453.1,370.2 424.9,464.1 425.0,462.1" fill="#1e1e1e" stroke="#1e1e1e" stroke-width="0.7"/>
<polygon points="453.1,370.2 453.1,371.6 424.8,466.1 424.9,464.1" fill="#1e1e1e" stroke="#1e1e1e" stroke-width="0.7"/>
<polygon points="453.1,371.6 453.0,373.0 424.7,468.1 424.8,466.1" fill="#1f1f1f" stroke="#1f1f1f" stroke-width="0.7"/>
<polygon points="453.0,373.0 452.9,374.3 424.6,470.1 424.7,468.1" fill="#1f1f1f" stroke="#1f1f1f" stroke-width="0.7"/>
<polygon points="452.9,374.3 452.9,375.7 424.6,472.1 424.6,470.1" fill="#1f1f1f" stroke="#1f1f1f" stroke-width="0.7"/>
<polygon points="452.9,375.7 452.8,377.1 424.5,474.1 424.6,472.1" fill="#1f1f1f" stroke="#1f1f1f" stroke-width="0.7"/>
<polygon points="452.8,377.1 453.5,378.4 425.5,476.0 424.5,474.1" fill="#202020" stroke="#202020" stroke-width="0.7"/>
<polygon points="453.5,378.4 454.2,379.7 426.5,477.9 425.5,476.0" fill="#212121" stroke="#212121" stroke-width="0.7"/>
<polygon points="454.2,379.7 454.9,381.0 427.5,479.9 426.5,477.9" fill="#212121" stroke="#212121" stroke-width="0.7"/>
<polygon points="454.9,381.0 455.6,382.4 428.5,481.8 427.5,479.9" fill="#222222" stroke="#222222" stroke-width="0.7"/>
<polygon points="455.6,382.4 456.3,383.7 429.5,483.7 428.5,481.8" fill="#232323" stroke="#232323" stroke-width="0.7"/>
<polygon points="456.3,383.7 457.0,385.0 430.5,485.6 429.5,483.7" fill="#242424" stroke="#242424" stroke-width="0.7"/>
<polygon points="457.0,385.0 457.7,386.3 431.5,487.5 430.5,485.6" fill="#242424" stroke="#242424" stroke-width="0.7"/>
<polygon points="457.7,386.3 458.4,387.6 432.5,489.5 431.5,487.5" fill="#252525" stroke="#252525" stroke-width="0.7"/>
<polygon points="458.4,387.6 459.7,388.8 434.5,491.1 432.5,489.5" fill="#272727" stroke="#272727" stroke-width="0.7"/>
<polygon points="459.7,388.8 461.1,389.9 436.5,492.8 434.5,491.1" fill="#2a2a2a" stroke="#2a2a2a" stroke-width="0.7"/>
<polygon points="461.1,389.9 462.5,391.0 438.5,494.4 436.5,492.8" fill="#2c2c2c" stroke="#2c2c2c" stroke-width="0.7"/>
<polygon points="462.5,391.0 463.8,392.2 440.5,496.1 438.5,494.4" fill="#2f2f2f" stroke="#2f2f2f" stroke-width="0.7"/>
<polygon points="463.8,392.2 465.2,393.3 442.5,497.7 440.5,496.1" fill="#323232" stroke="#323232" stroke-width="0.7"/>
<polygon points="465.2,393.3 466.6,394.4 444.5,499.3 442.5,497.7" fill="#353535" stroke="#353535" stroke-width="0.7"/>
<polygon points="466.6,394.4 467.9,395.5 446.5,501.0 444.5,499.3" fill="#373737" stroke="#373737" stroke-width="0.7"/>
<polygon points="467.9,395.5 469.3,396.7 448.5,502.6 446.5,501.0" fill="#3a3a3a" stroke="#3a3a3a" stroke-width="0.7"/>
<polygon points="469.3,396.7 471.2,397.5 451.3,503.9 448.5,502.6" fill="#3e3e3e" stroke="#3e3e3e" stroke-width="0.7"/>
<polygon points="471.2,397.5 473.1,398.3 454.0,505.1 451.3,503.9" fill="#444444" stroke="#444444" stroke-width="0.7"/>
<polygon points="473.1,398.3 475.0,399.2 456.8,506.3 454.0,505.1" fill="#4a4a4a" stroke="#4a4a4a" stroke-width="0.7"/>
<polygon points="475.0,399.2 476.9,400.0 459.6,507.5 456.8,506.3" fill="#505050" stroke="#505050" stroke-width="0.7"/>
<polygon points="476.9,400.0 478.8,400.8 462.4,508.7 459.6,507.5" fill="#555555" stroke="#555555" stroke-width="0.7"/>
<polygon points="478.8,400.8 480.7,401.7 465.2,509.9 462.4,508.7" fill="#5b5b5b" stroke="#5b5b5b" stroke-width="0.7"/>
<polygon points="480.7,401.7 482.6,402.5 468.0,511.1 465.2,509.9" fill="#616161" stroke="#616161" stroke-width="0.7"/>
<polygon points="482.6,402.5 484.6,403.3 470.7,512.3 468.0,511.1" fill="#676767" stroke="#676767" stroke-width="0.7"/>
<polygon points="484.6,403.3 486.8,403.8 474.0,513.0 470.7,512.3" fill="#6c6c6c" stroke="#6c6c6c" stroke-width="0.7"/>
<polygon points="486.8,403.8 489.1,404.2 477.3,513.7 474.0,513.0" fill="#717171" stroke="#717171" stroke-width="0.7"/>
<polygon points="489.1,404.2 491.3,404.7 480.6,514.3 477.3,513.7" fill="#777777" stroke="#777777" stroke-width="0.7"/>
<polygon points="491.3,404.7 493.6,405.1 483.9,515.0 480.6,514.3" fill="#7c7c7c" stroke="#7c7c7c" stroke-width="0.7"/>
<polygon points="493.6,405.1 495.9,405.6 487.3,515.6 483.9,515.0" fill="#818181" stroke="#818181" stroke-width="0.7"/>
<polygon points="495.9,405.6 498.1,406.0 490.6,516.3 487.3,515.6" fill="#868686" stroke="#868686" stroke-width="0.7"/>
<polygon points="498.1,406.0 500.4,406.5 493.9,517.0 490.6,516.3" fill="#8c8c8c" stroke="#8c8c8c" stroke-width="0.7"/>
<polygon points="500.4,406.5 502.7,406.9 497.2,517.6 493.9,517.0" fill="#919191" stroke="#919191" stroke-width="0.7"/>
<polygon points="502.7,406.9 505.1,407.0 500.7,517.7 497.2,517.6" fill="#959595" stroke="#959595" stroke-width="0.7"/>
<polygon points="505.1,407.0 507.5,407.0 504.1,517.7 500.7,517.7" fill="#989898" stroke="#989898" stroke-width="0.7"/>
<polygon points="507.5,407.0 509.9,407.0 507.6,517.7 504.1,517.7" fill="#9b9b9b" stroke="#9b9b9b" stroke-width="0.7"/>
<polygon points="509.9,407.0 512.3,407.0 511.1,517.8 507.6,517.7" fill="#9e9e9e" stroke="#9e9e9e" stroke-width="0.7"/>
<polygon points="512.3,407.0 514.7,407.1 514.6,517.8 511.1,517.8" fill="#a1a1a1" stroke="#a1a1a1" stroke-width="0.7"/>
<polygon points="514.7,407.1 517.1,407.1 518.1,517.9 514.6,517.8" fill="#a4a4a4" stroke="#a4a4a4" stroke-width="0.7"/>
<polygon points="517.1,407.1 519.4,407.1 521.6,517.9 518.1,517.9" fill="#a7a7a7" stroke="#a7a7a7" stroke-width="0.7"/>
<polygon points="519.4,407.1 521.8,407.2 525.1,517.9 521.6,517.9" fill="#aaaaaa" stroke="#aaaaaa" stroke-width="0.7"/>
<polygon points="521.8,407.2 524.1,406.8 528.5,517.4 525.1,517.9" fill="#acacac" stroke="#acacac" stroke-width="0.7"/>
<polygon points="524.1,406.8 526.4,406.4 531.8,516.8 528.5,517.4" fill="#aeaeae" stroke="#aeaeae" stroke-width="0.7"/>
<polygon points="526.4,406.4 528.7,406.0 535.2,516.2 531.8,516.8" fill="#b0b0b0" stroke="#b0b0b0" stroke-width="0.7"/>
<polygon points="528.7,406.0 531.0,405.6 538.5,515.6 535.2,516.2" fill="#b1b1b1" stroke="#b1b1b1" stroke-width="0.7"/>
<polygon points="531.0,405.6 533.3,405.2 541.9,515.0 538.5,515.6" fill="#b3b3b3" stroke="#b3b3b3" stroke-width="0.7"/>
<polygon points="533.3,405.2 535.6,404.8 545.2,514.5 541.9,515.0" fill="#b4b4b4" stroke="#b4b4b4" stroke-width="0.7"/>
<polygon points="535.6,404.8 537.9,404.4 548.6,513.9 545.2,514.5" fill="#b6b6b6" stroke="#b6b6b6" stroke-width="0.7"/>
<polygon points="537.9,404.4 540.2,404.0 551.9,513.3 548.6,513.9" fill="#b8b8b8" stroke="#b8b8b8" stroke-width="0.7"/>
<polygon points="540.2,404.0 542.2,403.2 554.8,512.1 551.9,513.3" fill="#b9b9b9" stroke="#b9b9b9" stroke-width="0.7"/>
<polygon points="542.2,403.2 544.2,402.4 557.7,511.0 554.8,512.1" fill="#bababa" stroke="#bababa" stroke-width="0.7"/>
<polygon points="544.2,402.4 546.1,401.6 560.5,509.9 557.7,511.0" fill="#bbbbbb" stroke="#bbbbbb" stroke-width="0.7"/>
<polygon points="546.1,401.6 548.1,400.8 563.4,508.7 560.5,509.9" fill="#bcbcbc" stroke="#bcbcbc" stroke-width="0.7"/>
<polygon points="548.1,400.8 550.1,400.0 566.3,507.6 563.4,508.7" fill="#bcbcbc" stroke="#bcbcbc" stroke-width="0.7"/>
<polygon points="550.1,400.0 552.0,399.3 569.2,506.4 566.3,507.6" fill="#bdbdbd" stroke="#bdbdbd" stroke-width="0.7"/>
<polygon points="552.0,399.3 554.0,398.5 572.0,505.3 569.2,506.4" fill="#bebebe" stroke="#bebebe" stroke-width="0.7"/>
<polygon points="554.0,398.5 556.0,397.7 574.9,504.1 572.0,505.3" fill="#bfbfbf" stroke="#bfbfbf" stroke-width="0.7"/>
<polygon points="556.0,397.7 557.4,396.6 577.0,502.5 574.9,504.1" fill="#c0c0c0" stroke="#c0c0c0" stroke-width="0.7"/>
<polygon points="557.4,396.6 558.9,395.5 579.1,500.9 577.0,502.5" fill="#c0c0c0" stroke="#c0c0c0" stroke-width="0.7"/>
<polygon points="558.9,395.5 560.3,394.4 581.3,499.3 579.1,500.9" fill="#c1c1c1" stroke="#c1c1c1" stroke-width="0.7"/>
<polygon points="560.3,394.4 561.8,393.3 583.4,497.7 581.3,499.3" fill="#c1c1c1" stroke="#c1c1c1" stroke-width="0.7"/>
<polygon points="561.8,393.3 563.2,392.2 585.5,496.1 583.4,497.7" fill="#c2c2c2" stroke="#c2c2c2" stroke-width="0.7"/>
<polygon points="563.2,392.2 564.7,391.1 587.6,494.5 585.5,496.1" fill="#c2c2c2" stroke="#c2c2c2" stroke-width="0.7"/>
<polygon points="564.7,391.1 566.2,390.0 589.7,492.9 587.6,494.5" fill="#c3c3c3" stroke="#c3c3c3" stroke-width="0.7"/>
<polygon points="566.2,390.0 567.6,388.9 591.9,491.3 589.7,492.9" fill="#c3c3c3" stroke="#c3c3c3" stroke-width="0.7"/>
<polygon points="567.6,388.9 568.4,387.6 593.0,489.4 591.9,491.3" fill="#c3c3c3" stroke="#c3c3c3" stroke-width="0.7"/>
<polygon points="568.4,387.6 569.2,386.3 594.2,487.5 593.0,489.4" fill="#c3c3c3" stroke="#c3c3c3" stroke-width="0.7"/>
<polygon points="569.2,386.3 570.0,385.0 595.3,485.6 594.2,487.5" fill="#c2c2c2" stroke="#c2c2c2" stroke-width="0.7"/>
<polygon points="570.0,385.0 570.8,383.7 596.5,483.7 595.3,485.6" fill="#c2c2c2" stroke="#c2c2c2" stroke-width="0.7"/>
<polygon points="570.8,383.7 571.6,382.4 597.6,481.8 596.5,483.7" fill="#c1c1c1" stroke="#c1c1c1" stroke-width="0.7"/>
<polygon points="571.6,382.4 572.4,381.1 598.8,479.9 597.6,481.8" fill="#c1c1c1" stroke="#c1c1c1" stroke-width="0.7"/>
<polygon points="572.4,381.1 573.1,379.8 599.9,478.1 598.8,479.9" fill="#c0c0c0" stroke="#c0c0c0" stroke-width="0.7"/>
<polygon points="573.1,379.8 573.9,378.5 601.1,476.2 599.9,478.1" fill="#c0c0c0" stroke="#c0c0c0" stroke-width="0.7"/>
<polygon points="425.1,458.0 425.0,460.0 389.0,566.1 389.2,563.3" fill="#1e1e1e" stroke="#1e1e1e" stroke-width="0.7"/>
<polygon points="425.0,460.0 425.0,462.1 388.9,569.0 389.0,566.1" fill="#1e1e1e" stroke="#1e1e1e" stroke-width="0.7"/>
<polygon points="425.0,462.1 424.9,464.1 388.8,571.8 388.9,569.0" fill="#1e1e1e" stroke="#1e1e1e" stroke-width="0.7"/>
<polygon points="424.9,464.1 424.8,466.1 388.7,574.6 388.8,571.8" fill="#1e1e1e" stroke="#1e1e1e" stroke-width="0.7"/>
<polygon points="424.8,466.1 424.7,468.1 388.6,577.5 388.7,574.6" fill="#1f1f1f" stroke="#1f1f1f" stroke-width="0.7"/>
<polygon points="424.7,468.1 424.6,470.1 388.5,580.3 388.6,577.5" fill="#1f1f1f" stroke="#1f1f1f" stroke-width="0.7"/>
<polygon points="424.6,470.1 424.6,472.1 388.4,583.2 388.5,580.3" fill="#1f1f1f" stroke="#1f1f1f" stroke-width="0.7"/>
<polygon points="424.6,472.1 424.5,474.1 388.3,586.0 388.4,583.2" fill="#1f1f1f" stroke="#1f1f1f" stroke-width="0.7"/>
<polygon points="424.5,474.1 425.5,476.0 389.7,588.7 388.3,586.0" fill="#202020" stroke="#202020" stroke-width="0.7"/>
<polygon points="425.5,476.0 426.5,477.9 391.1,591.4 389.7,588.7" fill="#212121" stroke="#212121" stroke-width="0.7"/>
<polygon points="426.5,477.9 427.5,479.9 392.5,594.1 391.1,591.4" fill="#222222" stroke="#222222" stroke-width="0.7"/>
<polygon points="427.5,479.9 428.5,481.8 394.0,596.9 392.5,594.1" fill="#232323" stroke="#232323" stroke-width="0.7"/>
<polygon points="428.5,481.8 429.5,483.7 395.4,599.6 394.0,596.9" fill="#242424" stroke="#242424" stroke-width="0.7"/>
<polygon points="429.5,483.7 430.5,485.6 396.8,602.3 395.4,599.6" fill="#252525" stroke="#252525" stroke-width="0.7"/>
<polygon points="430.5,485.6 431.5,487.5 398.2,605.0 396.8,602.3" fill="#262626" stroke="#262626" stroke-width="0.7"/>
<polygon points="431.5,487.5 432.5,489.5 399.7,607.7 398.2,605.0" fill="#272727" stroke="#272727" stroke-width="0.7"/>
<polygon points="432.5,489.5 434.5,491.1 402.5,610.1 399.7,607.7" fill="#292929" stroke="#292929" stroke-width="0.7"/>
<polygon points="434.5,491.1 436.5,492.8 405.3,612.4 402.5,610.1" fill="#2b2b2b" stroke="#2b2b2b" stroke-width="0.7"/>
<polygon points="436.5,492.8 438.5,494.4 408.1,614.7 405.3,612.4" fill="#2e2e2e" stroke="#2e2e2e" stroke-width="0.7"/>
<polygon points="438.5,494.4 440.5,496.1 410.9,617.0 408.1,614.7" fill="#303030" stroke="#303030" stroke-width="0.7"/>
<polygon points="440.5,496.1 442.5,497.7 413.8,619.4 410.9,617.0" fill="#333333" stroke="#333333" stroke-width="0.7"/>
<polygon points="442.5,497.7 444.5,499.3 416.6,621.7 413.8,619.4" fill="#353535" stroke="#353535" stroke-width="0.7"/>
<polygon points="444.5,499.3 446.5,501.0 419.4,624.0 416.6,621.7" fill="#383838" stroke="#383838" stroke-width="0.7"/>
<polygon points="446.5,501.0 448.5,502.6 422.2,626.4 419.4,624.0" fill="#3a3a3a" stroke="#3a3a3a" stroke-width="0.7"/>
<polygon points="448.5,502.6 451.3,503.9 426.1,628.1 422.2,626.4" fill="#3f3f3f" stroke="#3f3f3f" stroke-width="0.7"/>
<polygon points="451.3,503.9 454.0,505.1 430.1,629.8 426.1,628.1" fill="#454545" stroke="#454545" stroke-width="0.7"/>
<polygon points="454.0,505.1 456.8,506.3 434.0,631.5 430.1,629.8" fill="#4b4b4b" stroke="#4b4b4b" stroke-width="0.7"/>
<polygon points="456.8,506.3 459.6,507.5 438.0,633.2 434.0,631.5" fill="#515151" stroke="#515151" stroke-width="0.7"/>
<polygon points="459.6,507.5 462.4,508.7 441.9,634.9 438.0,633.2" fill="#585858" stroke="#585858" stroke-width="0.7"/>
<polygon points="462.4,508.7 465.2,509.9 445.8,636.7 441.9,634.9" fill="#5e5e5e" stroke="#5e5e5e" stroke-width="0.7"/>
<polygon points="465.2,509.9 468.0,511.1 449.8,638.4 445.8,636.7" fill="#646464" stroke="#646464" stroke-width="0.7"/>
<polygon points="468.0,511.1 470.7,512.3 453.7,640.1 449.8,638.4" fill="#6a6a6a" stroke="#6a6a6a" stroke-width="0.7"/>
<polygon points="470.7,512.3 474.0,513.0 458.4,641.0 453.7,640.1" fill="#707070" stroke="#707070" stroke-width="0.7"/>
<polygon points="474.0,513.0 477.3,513.7 463.0,641.9 458.4,641.0" fill="#747474" stroke="#747474" stroke-width="0.7"/>
<polygon points="477.3,513.7 480.6,514.3 467.7,642.9 463.0,641.9" fill="#787878" stroke="#787878" stroke-width="0.7"/>
<polygon points="480.6,514.3 483.9,515.0 472.4,643.8 467.7,642.9" fill="#7c7c7c" stroke="#7c7c7c" stroke-width="0.7"/>
<polygon points="483.9,515.0 487.3,515.6 477.0,644.7 472.4,643.8" fill="#808080" stroke="#808080" stroke-width="0.7"/>
<polygon points="487.3,515.6 490.6,516.3 481.7,645.7 477.0,644.7" fill="#848484" stroke="#848484" stroke-width="0.7"/>
<polygon points="490.6,516.3 493.9,517.0 486.4,646.6 481.7,645.7" fill="#888888" stroke="#888888" stroke-width="0.7"/>
<polygon points="493.9,517.0 497.2,517.6 491.0,647.5 486.4,646.6" fill="#8c8c8c" stroke="#8c8c8c" stroke-width="0.7"/>
<polygon points="497.2,517.6 500.7,517.7 496.0,647.6 491.0,647.5" fill="#919191" stroke="#919191" stroke-width="0.7"/>
<polygon points="500.7,517.7 504.1,517.7 500.9,647.7 496.0,647.6" fill="#959595" stroke="#959595" stroke-width="0.7"/>
<polygon points="504.1,517.7 507.6,517.7 505.9,647.7 500.9,647.7" fill="#999999" stroke="#999999" stroke-width="0.7"/>
<polygon points="507.6,517.7 511.1,517.8 510.8,647.8 505.9,647.7" fill="#9d9d9d" stroke="#9d9d9d" stroke-width="0.7"/>
<polygon points="511.1,517.8 514.6,517.8 515.8,647.8 510.8,647.8" fill="#a1a1a1" stroke="#a1a1a1" stroke-width="0.7"/>
<polygon points="514.6,517.8 518.1,517.9 520.7,647.9 515.8,647.8" fill="#a5a5a5" stroke="#a5a5a5" stroke-width="0.7"/>
<polygon points="518.1,517.9 521.6,517.9 525.7,647.9 520.7,647.9" fill="#a9a9a9" stroke="#a9a9a9" stroke-width="0.7"/>
<polygon points="521.6,517.9 525.1,517.9 530.6,648.0 525.7,647.9" fill="#adadad" stroke="#adadad" stroke-width="0.7"/>
<polygon points="525.1,517.9 528.5,517.4 535.3,647.2 530.6,648.0" fill="#b1b1b1" stroke="#b1b1b1" stroke-width="0.7"/>
<polygon points="528.5,517.4 531.8,516.8 540.1,646.4 535.3,647.2" fill="#b3b3b3" stroke="#b3b3b3" stroke-width="0.7"/>
<polygon points="531.8,516.8 535.2,516.2 544.8,645.5 540.1,646.4" fill="#b5b5b5" stroke="#b5b5b5" stroke-width="0.7"/>
<polygon points="535.2,516.2 538.5,515.6 549.6,644.7 544.8,645.5" fill="#b7b7b7" stroke="#b7b7b7" stroke-width="0.7"/>
<polygon points="538.5,515.6 541.9,515.0 554.3,643.9 549.6,644.7" fill="#b9b9b9" stroke="#b9b9b9" stroke-width="0.7"/>
<polygon points="541.9,515.0 545.2,514.5 559.0,643.1 554.3,643.9" fill="#bbbbbb" stroke="#bbbbbb" stroke-width="0.7"/>
<polygon points="545.2,514.5 548.6,513.9 563.8,642.2 559.0,643.1" fill="#bdbdbd" stroke="#bdbdbd" stroke-width="0.7"/>
<polygon points="548.6,513.9 551.9,513.3 568.5,641.4 563.8,642.2" fill="#bfbfbf" stroke="#bfbfbf" stroke-width="0.7"/>
<polygon points="551.9,513.3 554.8,512.1 572.6,639.8 568.5,641.4" fill="#c0c0c0" stroke="#c0c0c0" stroke-width="0.7"/>
<polygon points="554.8,512.1 557.7,511.0 576.6,638.2 572.6,639.8" fill="#c1c1c1" stroke="#c1c1c1" stroke-width="0.7"/>
<polygon points="557.7,511.0 560.5,509.9 580.7,636.6 576.6,638.2" fill="#c2c2c2" stroke="#c2c2c2" stroke-width="0.7"/>
<polygon points="560.5,509.9 563.4,508.7 584.8,634.9 580.7,636.6" fill="#c3c3c3" stroke="#c3c3c3" stroke-width="0.7"/>
<polygon points="563.4,508.7 566.3,507.6 588.8,633.3 584.8,634.9" fill="#c4c4c4" stroke="#c4c4c4" stroke-width="0.7"/>
<polygon points="566.3,507.6 569.2,506.4 592.9,631.7 588.8,633.3" fill="#c5c5c5" stroke="#c5c5c5" stroke-width="0.7"/>
<polygon points="569.2,506.4 572.0,505.3 597.0,630.1 592.9,631.7" fill="#c6c6c6" stroke="#c6c6c6" stroke-width="0.7"/>
<polygon points="572.0,505.3 574.9,504.1 601.0,628.5 597.0,630.1" fill="#c7c7c7" stroke="#c7c7c7" stroke-width="0.7"/>
<polygon points="574.9,504.1 577.0,502.5 604.0,626.2 601.0,628.5" fill="#c8c8c8" stroke="#c8c8c8" stroke-width="0.7"/>
<polygon points="577.0,502.5 579.1,500.9 607.0,623.9 604.0,626.2" fill="#c8c8c8" stroke="#c8c8c8" stroke-width="0.7"/>
<polygon points="579.1,500.9 581.3,499.3 610.0,621.7 607.0,623.9" fill="#c8c8c8" stroke="#c8c8c8" stroke-width="0.7"/>
<polygon points="581.3,499.3 583.4,497.7 613.0,619.4 610.0,621.7" fill="#c9c9c9" stroke="#c9c9c9" stroke-width="0.7"/>
<polygon points="583.4,497.7 585.5,496.1 616.0,617.1 613.0,619.4" fill="#c9c9c9" stroke="#c9c9c9" stroke-width="0.7"/>
<polygon points="585.5,496.1 587.6,494.5 619.0,614.9 616.0,617.1" fill="#cacaca" stroke="#cacaca" stroke-width="0.7"/>
<polygon points="587.6,494.5 589.7,492.9 622.0,612.6 619.0,614.9" fill="#cacaca" stroke="#cacaca" stroke-width="0.7"/>
<polygon points="589.7,492.9 591.9,491.3 625.0,610.4 622.0,612.6" fill="#cacaca" stroke="#cacaca" stroke-width="0.7"/>
<polygon points="591.9,491.3 593.0,489.4 626.6,607.7 625.0,610.4" fill="#cacaca" stroke="#cacaca" stroke-width="0.7"/>
<polygon points="593.0,489.4 594.2,487.5 628.2,605.0 626.6,607.7" fill="#c9c9c9" stroke="#c9c9c9" stroke-width="0.7"/>
<polygon points="594.2,487.5 595.3,485.6 629.9,602.3 628.2,605.0" fill="#c8c8c8" stroke="#c8c8c8" stroke-width="0.7"/>
<polygon points="595.3,485.6 596.5,483.7 631.5,599.6 629.9,602.3" fill="#c7c7c7" stroke="#c7c7c7" stroke-width="0.7"/>
<polygon points="596.5,483.7 597.6,481.8 633.1,597.0 631.5,599.6" fill="#c7c7c7" stroke="#c7c7c7" stroke-width="0.7"/>
<polygon points="597.6,481.8 598.8,479.9 634.8,594.3 633.1,597.0" fill="#c6c6c6" stroke="#c6c6c6" stroke-width="0.7"/>
<polygon points="598.8,479.9 599.9,478.1 636.4,591.6 634.8,594.3" fill="#c5c5c5" stroke="#c5c5c5" stroke-width="0.7"/>
<polygon points="599.9,478.1 601.1,476.2 638.0,588.9 636.4,591.6" fill="#c4c4c4" stroke="#c4c4c4" stroke-width="0.7"/>
<polygon points="465.27,294.33 464.92,303.22 469.38,311.74 478.21,319.03 490.54,324.41 505.17,327.33 520.66,327.51 535.50,324.93 548.24,319.85 557.62,312.77 562.73,304.37 563.08,295.48 558.62,286.96 549.79,279.67 537.46,274.29 522.83,271.37 507.34,271.19 492.50,273.77 479.76,278.85 470.38,285.93" fill="url(#inner)"/>
<g clip-path="url(#topclip)" stroke="#e58cbc" stroke-width="1.1">
<line x1="562.73" y1="304.37" x2="573.94" y2="378.51"/>
<line x1="563.08" y1="295.48" x2="574.36" y2="367.50"/>
<line x1="558.62" y1="286.96" x2="568.84" y2="356.97"/>
<line x1="549.79" y1="279.67" x2="557.91" y2="347.93"/>
<line x1="537.46" y1="274.29" x2="542.64" y2="341.28"/>
<line x1="522.83" y1="271.37" x2="524.53" y2="337.66"/>
<line x1="507.34" y1="271.19" x2="505.35" y2="337.44"/>
<line x1="492.50" y1="273.77" x2="486.98" y2="340.63"/>
<line x1="479.76" y1="278.85" x2="471.21" y2="346.92"/>
<line x1="470.38" y1="285.93" x2="459.60" y2="355.69"/>
</g>
<line x1="513.5" y1="118" x2="513.5" y2="326" stroke="#5cc83c" stroke-width="1.3" shape-rendering="crispEdges"/>
<g stroke="#e28cbc" stroke-width="1.1" stroke-opacity="0.8" fill="none">
<polyline points="465.27,294.33 453.26,366.09 425.11,458.04 389.16,563.29"/>
<polyline points="464.92,303.22 452.84,377.10 424.49,474.09 388.28,585.99"/>
<polyline points="450.64,377.10 422.29,474.09 386.08,585.99" stroke-width="0.7" stroke-opacity="0.45"/>
<polyline points="469.38,311.74 458.36,387.63 432.54,489.46 399.67,607.73"/>
<polyline points="456.16,387.63 430.34,489.46 397.47,607.73" stroke-width="0.7" stroke-opacity="0.45"/>
<polyline points="478.21,319.03 469.29,396.67 448.48,502.64 422.21,626.36"/>
<polyline points="467.09,396.67 446.28,502.64 420.01,626.36" stroke-width="0.7" stroke-opacity="0.45"/>
<polyline points="490.54,324.41 484.56,403.32 470.74,512.34 453.70,640.08"/>
<polyline points="505.17,327.33 502.67,406.94 497.15,517.61 491.05,647.54"/>
<polyline points="520.66,327.51 521.85,407.16 525.12,517.94 530.61,648.00"/>
<polyline points="535.50,324.93 540.22,403.97 551.92,513.29 568.50,641.42"/>
<polyline points="548.24,319.85 555.99,397.68 574.91,504.12 601.02,628.45"/>
<polyline points="558.19,397.68 577.11,504.12 603.22,628.45" stroke-width="0.7" stroke-opacity="0.45"/>
<polyline points="557.62,312.77 567.60,388.91 591.86,491.32 624.98,610.36"/>
<polyline points="569.80,388.91 594.06,491.32 627.18,610.36" stroke-width="0.7" stroke-opacity="0.45"/>
<polyline points="562.73,304.37 573.94,378.51 601.09,476.16 638.04,588.91"/>
<polyline points="563.08,295.48 574.36,367.50 601.71,460.11 638.92,566.21"/>
<polyline points="453.26,366.09 452.84,377.10 458.36,387.63 469.29,396.67 484.56,403.32 502.67,406.94 521.85,407.16 540.22,403.97 555.99,397.68 567.60,388.91 573.94,378.51 574.36,367.50"/>
<polyline points="425.11,458.04 424.49,474.09 432.54,489.46 448.48,502.64 470.74,512.34 497.15,517.61 525.12,517.94 551.92,513.29 574.91,504.12 591.86,491.32 601.09,476.16 601.71,460.11"/>
<polyline points="389.16,563.29 388.28,585.99 399.67,607.73 422.21,626.36 453.70,640.08 491.05,647.54 530.61,648.00 568.50,641.42 601.02,628.45 624.98,610.36 638.04,588.91 638.92,566.21"/>
</g>
<polygon points="465.27,294.33 464.92,303.22 469.38,311.74 478.21,319.03 490.54,324.41 505.17,327.33 520.66,327.51 535.50,324.93 548.24,319.85 557.62,312.77 562.73,304.37 563.08,295.48 558.62,286.96 549.79,279.67 537.46,274.29 522.83,271.37 507.34,271.19 492.50,273.77 479.76,278.85 470.38,285.93" fill="none" stroke="#f0c6dc" stroke-width="1.6"/>
<g fill="#dc8cb8">
<rect x="462.77" y="291.83" width="5" height="5"/>
<rect x="462.42" y="300.72" width="5" height="5"/>
<rect x="466.88" y="309.24" width="5" height="5"/>
<rect x="475.71" y="316.53" width="5" height="5"/>
<rect x="488.04" y="321.91" width="5" height="5"/>
<rect x="502.67" y="324.83" width="5" height="5"/>
<rect x="518.16" y="325.01" width="5" height="5"/>
<rect x="533.00" y="322.43" width="5" height="5"/>
<rect x="545.74" y="317.35" width="5" height="5"/>
<rect x="555.12" y="310.27" width="5" height="5"/>
<rect x="560.23" y="301.87" width="5" height="5"/>
<rect x="560.58" y="292.98" width="5" height="5"/>
<rect x="556.12" y="284.46" width="5" height="5"/>
<rect x="547.29" y="277.17" width="5" height="5"/>
<rect x="534.96" y="271.79" width="5" height="5"/>
<rect x="520.33" y="268.87" width="5" height="5"/>
<rect x="504.84" y="268.69" width="5" height="5"/>
<rect x="490.00" y="271.27" width="5" height="5"/>
<rect x="477.26" y="276.35" width="5" height="5"/>
<rect x="467.88" y="283.43" width="5" height="5"/>
<rect x="450.76" y="363.59" width="5" height="5"/>
<rect x="450.34" y="374.60" width="5" height="5"/>
<rect x="455.86" y="385.13" width="5" height="5"/>
<rect x="466.79" y="394.17" width="5" height="5"/>
<rect x="482.06" y="400.82" width="5" height="5"/>
<rect x="500.17" y="404.44" width="5" height="5"/>
<rect x="519.35" y="404.66" width="5" height="5"/>
<rect x="537.72" y="401.47" width="5" height="5"/>
<rect x="553.49" y="395.18" width="5" height="5"/>
<rect x="565.10" y="386.41" width="5" height="5"/>
<rect x="571.44" y="376.01" width="5" height="5"/>
<rect x="571.86" y="365.00" width="5" height="5"/>
<rect x="422.61" y="455.54" width="5" height="5"/>
<rect x="421.99" y="471.59" width="5" height="5"/>
<rect x="430.04" y="486.96" width="5" height="5"/>
<rect x="445.98" y="500.14" width="5" height="5"/>
<rect x="468.24" y="509.84" width="5" height="5"/>
<rect x="494.65" y="515.11" width="5" height="5"/>
<rect x="522.62" y="515.44" width="5" height="5"/>
<rect x="549.42" y="510.79" width="5" height="5"/>
<rect x="572.41" y="501.62" width="5" height="5"/>
<rect x="589.36" y="488.82" width="5" height="5"/>
<rect x="598.59" y="473.66" width="5" height="5"/>
<rect x="599.21" y="457.61" width="5" height="5"/>
<rect x="386.66" y="560.79" width="5" height="5"/>
<rect x="385.78" y="583.49" width="5" height="5"/>
<rect x="397.17" y="605.23" width="5" height="5"/>
<rect x="419.71" y="623.86" width="5" height="5"/>
<rect x="451.20" y="637.58" width="5" height="5"/>
<rect x="488.55" y="645.04" width="5" height="5"/>
<rect x="528.11" y="645.50" width="5" height="5"/>
<rect x="566.00" y="638.92" width="5" height="5"/>
<rect x="598.52" y="625.95" width="5" height="5"/>
<rect x="622.48" y="607.86" width="5" height="5"/>
<rect x="635.54" y="586.41" width="5" height="5"/>
<rect x="636.42" y="563.71" width="5" height="5"/>
</g>
<line x1="505.17" y1="327.33" x2="522.83" y2="271.37" stroke="#7cc4dc" stroke-width="1.2"/>
<rect x="502.67" y="324.83" width="5" height="5" fill="#7cc4dc"/><rect x="520.33" y="268.87" width="5" height="5" fill="#7cc4dc"/>
<line x1="389.16" y1="563.29" x2="638.04" y2="588.91" stroke="#7cc4dc" stroke-width="1.2"/>
<rect x="386.66" y="560.79" width="5" height="5" fill="#7cc4dc"/><rect x="635.54" y="586.41" width="5" height="5" fill="#7cc4dc"/>
<text x="650" y="155.5" font-family="Liberation Sans, sans-serif" font-size="11" fill="#6e6ee8">300mm</text>
<text x="603" y="299.2" font-family="Liberation Sans, sans-serif" font-size="11" fill="#6e6ee8">200</text>
<text x="559.5" y="444" font-family="Liberation Sans, sans-serif" font-size="11" fill="#8a7ae8">100</text>
<text x="468" y="732" font-family="Liberation Sans, sans-serif" font-size="11" fill="#6e6ee8">-100</text>
<text x="262" y="562" font-family="Liberation Sans, sans-serif" font-size="11" fill="#d04030">100</text>
<text x="765" y="614" font-family="Liberation Sans, sans-serif" font-size="11" fill="#d04030">-100</text>
<rect x="508.5" y="298.5" width="90" height="21" fill="#d4d4d4" fill-opacity="0.82" stroke="#1e1e1e" stroke-width="1"/>
<line x1="579" y1="298" x2="579" y2="320" stroke="#1e1e1e" stroke-width="1"/>
<text x="514" y="314.3" font-family="Liberation Sans, sans-serif" font-size="14.5" fill="#1a1a1a">38.77mm</text>
<text x="583" y="314" font-family="Liberation Sans, sans-serif" font-size="13.5" fill="#1a1a1a">X</text>
<rect x="508.5" y="575.5" width="90" height="21" fill="#d4d4d4" fill-opacity="0.82" stroke="#1e1e1e" stroke-width="1"/>
<text x="514" y="586.5" font-family="Liberation Sans, sans-serif" font-size="11" fill="#e03a2a">0mm</text>
<line x1="579" y1="575" x2="579" y2="597" stroke="#1e1e1e" stroke-width="1"/>
<text x="514" y="591.3" font-family="Liberation Sans, sans-serif" font-size="14.5" fill="#1a1a1a">98.08mm</text>
<text x="583" y="591" font-family="Liberation Sans, sans-serif" font-size="13.5" fill="#1a1a1a">X</text>
</svg>
<div class="a" style="left:849px;top:90px;width:7px;height:680px;background:#d8d9d7"></div>
<div class="a" style="left:856px;top:90px;width:168px;height:680px;background:#d8d9d7"></div>
<div class="a" style="left:856px;top:91px;width:167px;height:20px;background:#9b9b9b"></div>
<div class="t" style="left:856px;top:94px;width:167px;text-align:center;font-size:13.5px;letter-spacing:-0.6px;color:#f2f2f2">オブジェクト</div>
<svg class="a" style="left:1005px;top:95px" width="13" height="13"><path d="M1.5 1.5L11.5 11.5M11.5 1.5L1.5 11.5" stroke="#fafafa" stroke-width="2.4"/></svg>
<div class="btn" style="left:856px;top:112px;width:56px;height:27px"></div>
<div class="t" style="left:871.0px;top:118.2px;font-size:13px;color:#333">新規</div>
<div class="btn" style="left:912px;top:112px;width:56px;height:27px"></div>
<div class="t" style="left:927.0px;top:118.2px;font-size:13px;color:#333">複製</div>
<div class="btn" style="left:968px;top:112px;width:55px;height:27px"></div>
<div class="t" style="left:982.5px;top:118.2px;font-size:13px;color:#333">削除</div>
<div class="btn" style="left:856px;top:139px;width:56px;height:27px"></div>
<div class="t" style="left:871.0px;top:145.2px;font-size:13px;color:#333">設定</div>
<div class="btn" style="left:912px;top:139px;width:28px;height:27px"></div>
<div class="t" style="left:922.0px;top:145.2px;font-size:13px;color:#333"><</div>
<div class="btn" style="left:940px;top:139px;width:28px;height:27px"></div>
<div class="t" style="left:950.0px;top:145.2px;font-size:13px;color:#333">></div>
<div class="btn" style="left:968px;top:139px;width:55px;height:27px"></div>
<div class="t" style="left:989.0px;top:145.2px;font-size:13px;color:#333">他</div>
<div class="a" style="left:856px;top:167px;width:147px;height:255px;background:#e2e3e1;border:1px solid #8c8c8c;border-right:none"></div>
<div class="a" style="left:857px;top:168px;width:146px;height:30px;background:#b1e0a9"></div>
<svg class="a" style="left:861px;top:175px" width="24" height="18">
<ellipse cx="6" cy="9" rx="4.4" ry="6.8" fill="#e6e6e6" stroke="#999" stroke-width="1.4"/>
<ellipse cx="17" cy="9" rx="4.4" ry="6.8" fill="#e6e6e6" stroke="#999" stroke-width="1.4"/>
<ellipse cx="5.8" cy="9" rx="2.6" ry="3.3" fill="#5a5a5a"/><ellipse cx="16.8" cy="9" rx="2.6" ry="3.3" fill="#5a5a5a"/>
<circle cx="5" cy="7.6" r="0.9" fill="#bbb"/><circle cx="16" cy="7.6" r="0.9" fill="#bbb"/>
</svg>
<div class="a" style="left:891px;top:177px;width:14px;height:14px;border:1.5px solid #8a8a8a;border-radius:2px"></div>
<svg class="a" style="left:914px;top:180px" width="16" height="8"><polygon points="1.5,0.5 13.5,0.5 7.5,7" fill="#4a4a4a"/></svg>
<div class="t" style="left:938px;top:177px;font-size:13.5px;color:#222">obj1</div>
<div class="a" style="left:1003px;top:167px;width:20px;height:255px;background:#d2d3d1;border-bottom:1px solid #8c8c8c"></div>
<div class="a" style="left:1003px;top:168px;width:20px;height:20px;background:#a0a0a0"></div>
<svg class="a" style="left:1003px;top:168px" width="20" height="20"><polygon points="10,5 17,13 3,13" fill="#e6e6e6"/></svg>
<div class="a" style="left:1003px;top:402px;width:20px;height:19px;background:#a0a0a0"></div>
<svg class="a" style="left:1003px;top:402px" width="20" height="19"><polygon points="3,5 17,5 10,13" fill="#e6e6e6"/></svg>
<div class="a" style="left:856px;top:430px;width:167px;height:20px;background:#9b9b9b"></div>
<div class="t" style="left:856px;top:433px;width:167px;text-align:center;font-size:13.5px;letter-spacing:-0.6px;color:#f2f2f2">材質</div>
<svg class="a" style="left:1005px;top:434px" width="13" height="13"><path d="M1.5 1.5L11.5 11.5M11.5 1.5L1.5 11.5" stroke="#fafafa" stroke-width="2.4"/></svg>
<div class="btn" style="left:856px;top:451px;width:56px;height:27px"></div>
<div class="t" style="left:871.0px;top:457.2px;font-size:13px;color:#333">新規</div>
<div class="btn" style="left:912px;top:451px;width:56px;height:27px"></div>
<div class="t" style="left:927.0px;top:457.2px;font-size:13px;color:#333">複製</div>
<div class="btn" style="left:968px;top:451px;width:55px;height:27px"></div>
<div class="t" style="left:982.5px;top:457.2px;font-size:13px;color:#333">削除</div>
<div class="btn" style="left:856px;top:478px;width:56px;height:27px"></div>
<div class="t" style="left:871.0px;top:484.2px;font-size:13px;color:#333">設定</div>
<div class="btn" style="left:968px;top:478px;width:55px;height:27px"></div>
<div class="t" style="left:989.0px;top:484.2px;font-size:13px;color:#333">他</div>
<div class="a" style="left:912px;top:478px;width:56px;height:27px;background:#d3d4d2"></div>
<div class="a" style="left:856px;top:506px;width:147px;height:264px;background:#e2e3e1;border-left:1px solid #8c8c8c;border-top:1px solid #8c8c8c"></div>
<div class="a" style="left:857px;top:507px;width:146px;height:30px;background:#b1e0a9"></div>
<div class="a" style="left:862px;top:512px;width:22px;height:22px;background:#fff;border:2px solid #1e1e1e"></div>
<div class="t" style="left:892px;top:515px;font-size:13.5px;color:#222">mat1</div>
<div class="a" style="left:1003px;top:506px;width:20px;height:264px;background:#d2d3d1"></div>
<div class="a" style="left:1003px;top:506px;width:20px;height:20px;background:#a0a0a0"></div>
<svg class="a" style="left:1003px;top:506px" width="20" height="20"><polygon points="10,5 17,13 3,13" fill="#e6e6e6"/></svg>
<div class="a" style="left:1003px;top:748px;width:20px;height:21px;background:#a0a0a0"></div>
<svg class="a" style="left:1003px;top:748px" width="20" height="21"><polygon points="3,5 17,5 10,13" fill="#e6e6e6"/></svg>
</div><div class="a" style="left:0;top:0;width:1024px;height:770px;border-radius:8px;border:1px solid #383838;box-shadow:0 0 0 40px #1c1c1c;pointer-events:none"></div></body></html>
